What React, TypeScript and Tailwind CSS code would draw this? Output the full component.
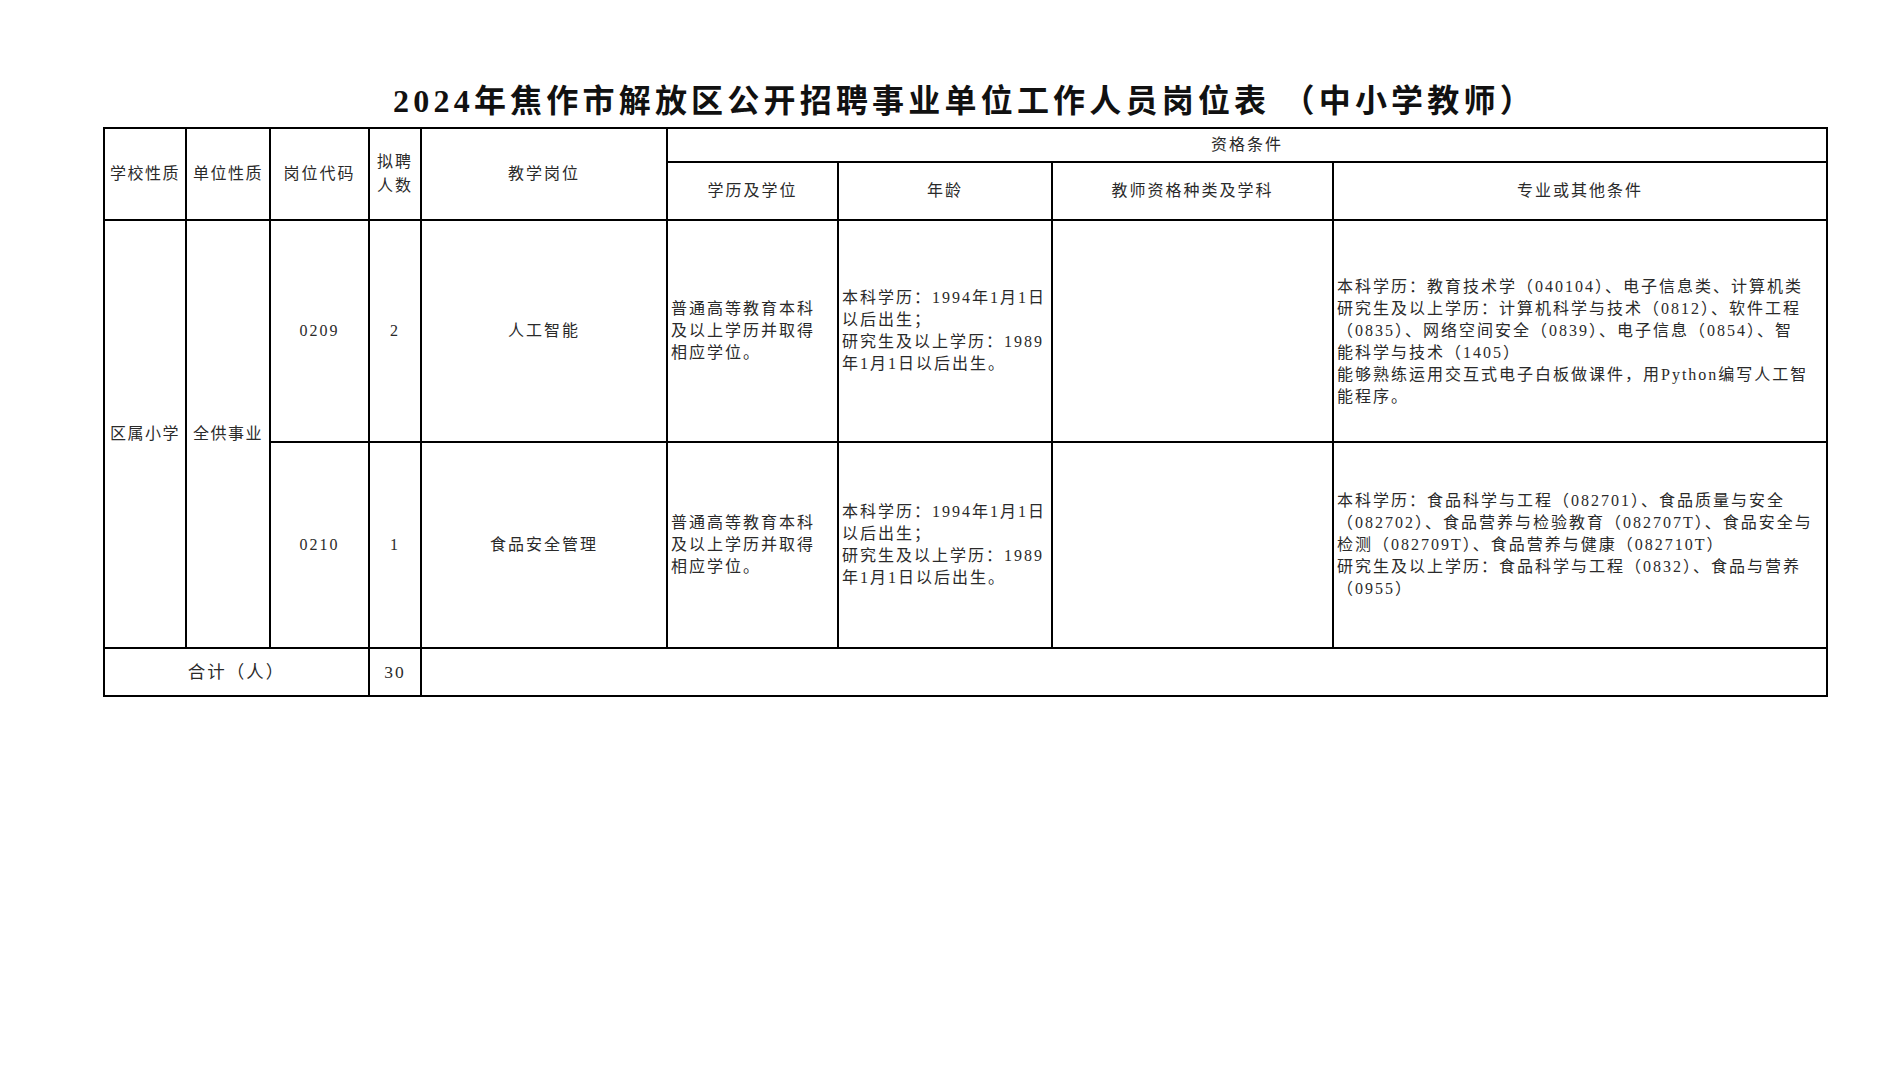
import React from 'react';

const cell = 'border-2 border-black px-[3px] align-middle font-normal';

const Lines: React.FC<{ lines: string[] }> = ({ lines }) => (
  <div className="text-left">
    {lines.map((l, i) => (
      <div key={i} className="whitespace-nowrap">
        {l}
      </div>
    ))}
  </div>
);

const eduText = ['普通高等教育本科', '及以上学历并取得', '相应学位。'];
const ageText = ['本科学历：1994年1月1日', '以后出生；', '研究生及以上学历：1989', '年1月1日以后出生。'];

const rows = [
  {
    code: '0209',
    count: '2',
    post: '人工智能',
    height: 'h-[222px]',
    pad: 'pt-[22px]',
    other: [
      '本科学历：教育技术学（040104）、电子信息类、计算机类',
      '研究生及以上学历：计算机科学与技术（0812）、软件工程',
      '（0835）、网络空间安全（0839）、电子信息（0854）、智',
      '能科学与技术（1405）',
      '能够熟练运用交互式电子白板做课件，用Python编写人工智',
      '能程序。',
    ],
  },
  {
    code: '0210',
    count: '1',
    post: '食品安全管理',
    height: 'h-[206px]',
    pad: '',
    other: [
      '本科学历：食品科学与工程（082701）、食品质量与安全',
      '（082702）、食品营养与检验教育（082707T）、食品安全与',
      '检测（082709T）、食品营养与健康（082710T）',
      '研究生及以上学历：食品科学与工程（0832）、食品与营养',
      '（0955）',
    ],
  },
];

export default function App() {
  return (
    <div className="min-h-screen w-full bg-white pt-[81px] font-['Liberation_Serif','Noto_Sans_CJK_SC',serif] text-[#2a2a2a]">
      <h1 className="h-[40px] pl-[28px] text-center text-[32px] leading-[40px] font-bold tracking-[4.2px] text-[#111]">
        2024年焦作市解放区公开招聘事业单位工作人员岗位表 （中小学教师）
      </h1>
      <div className="mt-[6px] pl-[103px]">
        <table className="w-[1723px] table-fixed border-collapse text-[16px] leading-[22px] tracking-[2px]">
          <colgroup>
            <col className="w-[82px]" />
            <col className="w-[84px]" />
            <col className="w-[99px]" />
            <col className="w-[52px]" />
            <col className="w-[246px]" />
            <col className="w-[171px]" />
            <col className="w-[214px]" />
            <col className="w-[281px]" />
            <col className="w-[494px]" />
          </colgroup>
          <thead>
            <tr className="h-[34px]">
              <th rowSpan={2} className={`${cell} text-center tracking-[1.5px]`}>学校性质</th>
              <th rowSpan={2} className={`${cell} text-center tracking-[1.5px]`}>单位性质</th>
              <th rowSpan={2} className={`${cell} text-center`}>岗位代码</th>
              <th rowSpan={2} className={`${cell} text-center leading-[24px]`}>
                拟聘
                <br />
                人数
              </th>
              <th rowSpan={2} className={`${cell} text-center`}>教学岗位</th>
              <th colSpan={4} className={`${cell} text-center`}>资格条件</th>
            </tr>
            <tr className="h-[58px]">
              <th className={`${cell} text-center`}>学历及学位</th>
              <th className={`${cell} text-center`}>年龄</th>
              <th className={`${cell} text-center`}>教师资格种类及学科</th>
              <th className={`${cell} text-center`}>专业或其他条件</th>
            </tr>
          </thead>
          <tbody>
            {rows.map((r, i) => (
              <tr key={r.code} className={r.height}>
                {i === 0 && (
                  <>
                    <td rowSpan={2} className={`${cell} text-center whitespace-nowrap tracking-[1.5px]`}>区属小学</td>
                    <td rowSpan={2} className={`${cell} text-center whitespace-nowrap tracking-[1.5px]`}>全供事业</td>
                  </>
                )}
                <td className={`${cell} text-center`}>{r.code}</td>
                <td className={`${cell} text-center`}>{r.count}</td>
                <td className={`${cell} text-center`}>{r.post}</td>
                <td className={cell}>
                  <Lines lines={eduText} />
                </td>
                <td className={cell}>
                  <Lines lines={ageText} />
                </td>
                <td className={cell}></td>
                <td className={`${cell} ${r.pad}`}>
                  <Lines lines={r.other} />
                </td>
              </tr>
            ))}
            <tr className="h-[48px]">
              <td colSpan={3} className={`${cell} text-center text-[17.5px]`}>合计（人）</td>
              <td className={`${cell} text-center text-[17.5px]`}>30</td>
              <td colSpan={5} className={cell}></td>
            </tr>
          </tbody>
        </table>
      </div>
    </div>
  );
}
